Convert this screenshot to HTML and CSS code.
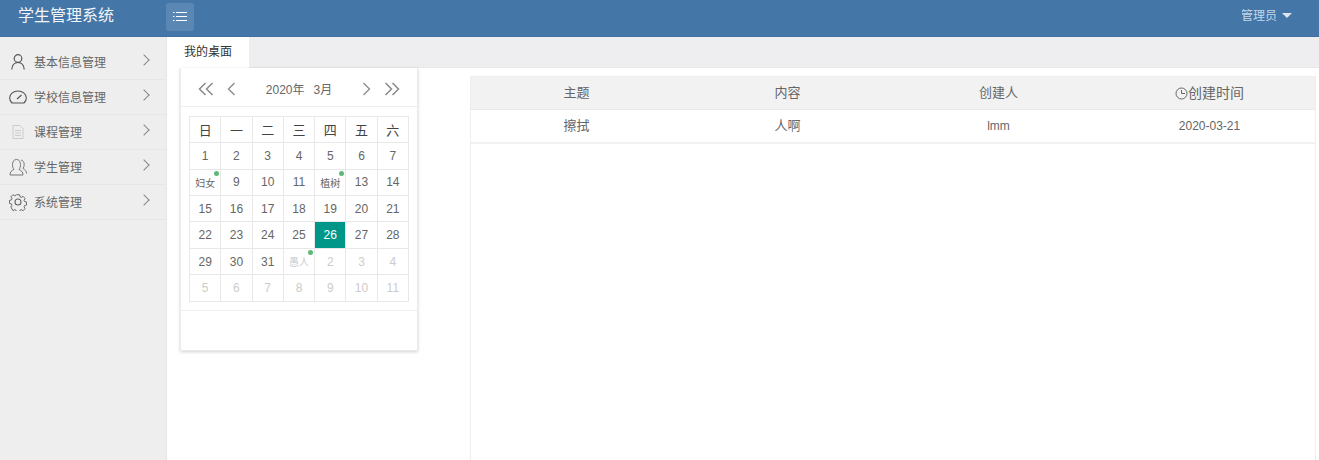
FILE: index.html
```html
<!DOCTYPE html>
<html lang="zh-CN">
<head>
<meta charset="utf-8">
<title>学生管理系统</title>
<link rel="stylesheet" href="styles.css">
</head>
<body>
<header class="topbar">
  <div class="brand">学生管理系统</div>
  <button class="menu-toggle" aria-label="menu">
    <svg width="16" height="12" viewBox="0 0 16 12" fill="none" stroke="#fff" stroke-width="1"><path d="M1 1.500h1.500M4 1.500h11M1 5.500h1.500M4 5.500h11M1 9.500h1.500M4 9.500h11"/></svg>
  </button>
  <div class="user">管理员<span class="caret"></span></div>
</header>
<div class="body">
  <aside class="sidebar">
    <div class="nav-item">
      <svg class="nav-icon" width="18" height="18" viewBox="0 0 18 18" fill="none" stroke="#555" stroke-width="1.200"><circle cx="9" cy="5.500" r="3.800"/><path d="M2.800 16.500c.3-4 2.500-7 6.200-7s5.900 3 6.200 7"/></svg>
      <span class="nav-label">基本信息管理</span><span class="chev"></span>
    </div>
    <div class="nav-item">
      <svg class="nav-icon" width="18" height="18" viewBox="0 0 18 18" fill="none" stroke="#555" stroke-width="1.100"><path d="M3 15h12c1.800-1.700 2.500-3.500 2.300-5.300C17 5.700 13.500 3 9 3S1 5.700.7 9.700C.5 11.500 1.200 13.300 3 15z"/><path d="M8 11l4.500-4"/></svg>
      <span class="nav-label">学校信息管理</span><span class="chev"></span>
    </div>
    <div class="nav-item">
      <svg class="nav-icon" width="18" height="18" viewBox="0 0 18 18" fill="none" stroke="#ccc" stroke-width="1"><path d="M4 2.500h7l3 3v10H4z"/><path d="M6 7.500h6M6 10h6M6 12.500h6"/></svg>
      <span class="nav-label">课程管理</span><span class="chev"></span>
    </div>
    <div class="nav-item">
      <svg class="nav-icon" width="18" height="18" viewBox="0 0 18 18" fill="none" stroke="#777" stroke-width="1"><path d="M1 17c0-3 1.500-4.500 4-5.500C3.800 10 3.500 8.500 3.500 6.500 3.500 3.500 5 1.500 7.500 1.500s4 2 4 5c0 2-.4 3.500-1.500 5 2.500 1 4 2.500 4 5.500z"/><path d="M12 2c2 .4 3.200 2 3.200 4.500 0 1.500-.4 3-1.200 4 2 .8 3.500 2.500 3.500 5"/></svg>
      <span class="nav-label">学生管理</span><span class="chev"></span>
    </div>
    <div class="nav-item">
      <svg class="nav-icon" width="18" height="18" viewBox="0 0 18 18" fill="none" stroke="#666" stroke-width="1.100"><circle cx="9" cy="9" r="3"/><path d="M7.300.800h3.400l.5 2.300 1.500.7 2-1.200 2.300 2.400-1.200 2 .6 1.500 2.200.5v3.400l-2.200.5-.6 1.500 1.200 2-2.300 2.400-2-1.200-1.500.7-.5 2.300H7.300l-.5-2.300-1.500-.7-2 1.200L1 14.600l1.200-2-.6-1.500-2.200-.5V7.200l2.200-.5.6-1.500L1 3.200 3.300.8l2 1.200 1.500-.7z" transform="translate(1 1) scale(.89)"/></svg>
      <span class="nav-label">系统管理</span><span class="chev"></span>
    </div>
  </aside>
  <main class="content">
    <div class="tabs"><div class="tab">我的桌面</div></div>
    <div class="desk">
      <section class="calendar">
        <div class="cal-head">
          <span class="cal-arrows">
            <svg width="16" height="14" viewBox="0 0 16 14" fill="none" stroke="#8a8a8a" stroke-width="1.500"><path d="M7.500 1L1.500 7l6 6M14.500 1l-6 6 6 6"/></svg>
            <svg width="9" height="14" viewBox="0 0 9 14" fill="none" stroke="#8a8a8a" stroke-width="1.300"><path d="M7.500 1L1.500 7l6 6"/></svg>
          </span>
          <span class="cal-title"><span>2020年</span><span>3月</span></span>
          <span class="cal-arrows">
            <svg width="9" height="14" viewBox="0 0 9 14" fill="none" stroke="#8a8a8a" stroke-width="1.300"><path d="M1.500 1l6 6-6 6"/></svg>
            <svg width="16" height="14" viewBox="0 0 16 14" fill="none" stroke="#8a8a8a" stroke-width="1.500"><path d="M1.500 1l6 6-6 6M8.500 1l6 6-6 6"/></svg>
          </span>
        </div>
        <div class="cal-body">
          <table class="cal-table">
            <thead><tr><th>日</th><th>一</th><th>二</th><th>三</th><th>四</th><th>五</th><th>六</th></tr></thead>
            <tbody>
              <tr><td>1</td><td>2</td><td>3</td><td>4</td><td>5</td><td>6</td><td>7</td></tr>
              <tr><td class="mark">妇女</td><td>9</td><td>10</td><td>11</td><td class="mark">植树</td><td>13</td><td>14</td></tr>
              <tr><td>15</td><td>16</td><td>17</td><td>18</td><td>19</td><td>20</td><td>21</td></tr>
              <tr><td>22</td><td>23</td><td>24</td><td>25</td><td class="today">26</td><td>27</td><td>28</td></tr>
              <tr><td>29</td><td>30</td><td>31</td><td class="mark off">愚人</td><td class="off">2</td><td class="off">3</td><td class="off">4</td></tr>
              <tr><td class="off">5</td><td class="off">6</td><td class="off">7</td><td class="off">8</td><td class="off">9</td><td class="off">10</td><td class="off">11</td></tr>
            </tbody>
          </table>
        </div>
        <div class="cal-foot"></div>
      </section>
      <section class="records">
        <div class="rec-row rec-head">
          <div>主题</div><div>内容</div><div>创建人</div>
          <div class="time-col"><svg width="13" height="13" viewBox="0 0 13 13" fill="none" stroke="#666" stroke-width="1"><circle cx="6.500" cy="6.500" r="5.500"/><path d="M6.500 3v3.500H10"/></svg>创建时间</div>
        </div>
        <div class="rec-row">
          <div class="cjk-cell">擦拭</div><div class="cjk-cell">人啊</div><div>lmm</div><div>2020-03-21</div>
        </div>
      </section>
    </div>
  </main>
</div>
</body>
</html>
```
FILE: styles.css
```css
* { box-sizing: border-box; }
html, body { margin: 0; height: 100%; overflow: hidden; }
body {
  font-family: "Liberation Sans", "Noto Sans CJK SC", sans-serif;
  font-size: 13px;
  color: #666;
  background: #fff;
  display: flex;
  flex-direction: column;
}
.topbar {
  flex: none;
  height: 37px;
  background: #4476a7;
  border-bottom: 1px solid #3f70a0;
  display: flex;
  align-items: center;
  color: #fff;
}
.brand {
  width: 166px;
  padding: 0 0 5px 18px;
  font-size: 16px;
  line-height: 20px;
  color: #f2f5f9;
}
.menu-toggle {
  width: 28px;
  height: 28px;
  margin-top: -2px;
  padding: 0;
  border: 0;
  border-radius: 2px;
  background: #5a87b3;
  display: flex;
  align-items: center;
  justify-content: center;
}
.user {
  margin-left: auto;
  margin-right: 27px;
  padding-bottom: 8px;
  font-size: 12px;
  color: #c5d6e8;
  display: flex;
  align-items: center;
}
.caret {
  margin-left: 5px;
  margin-top: 2px;
  border-left: 5px solid transparent;
  border-right: 5px solid transparent;
  border-top: 5px solid #dbe5f0;
}
.body { flex: 1; display: flex; min-height: 0; }
.sidebar {
  flex: none;
  width: 167px;
  background: #eee;
  padding-top: 8px;
  border-right: 1px solid #e6e6e6;
}
.nav-item {
  height: 35px;
  border-bottom: 1px solid #e6e6e6;
  display: flex;
  align-items: center;
  padding-left: 9px;
  position: relative;
}
.nav-icon { flex: none; }
.nav-label { margin-left: 7px; padding-bottom: 2px; font-size: 12px; color: #666; }
.chev {
  position: absolute;
  right: 18px;
  top: 11px;
  width: 8px;
  height: 8px;
  border-top: 1px solid #888;
  border-right: 1px solid #888;
  transform: rotate(45deg);
}
.content { flex: 1; min-width: 0; display: flex; flex-direction: column; }
.tabs {
  flex: none;
  height: 31px;
  background: #eeeef0;
  border-bottom: 1px solid #e8e8e8;
  display: flex;
}
.tab {
  width: 82px;
  height: 31px;
  background: #fff;
  color: #333;
  font-size: 12px;
  text-align: center;
  line-height: 31px;
}
.desk { flex: 1; display: flex; align-items: flex-start; padding-left: 13px; min-height: 0; }
.calendar {
  flex: none;
  width: 238px;
  height: 283px;
  background: #fff;
  border: 1px solid #eaeaea;
  border-top: 0;
  box-shadow: 0 1px 3px rgba(0, 0, 0, .18);
  display: flex;
  flex-direction: column;
}
.cal-head {
  height: 39px;
  border-bottom: 1px solid #eee;
  display: flex;
  align-items: center;
  justify-content: space-between;
  padding: 3px 17px 0 17px;
}
.cal-arrows { display: flex; align-items: center; gap: 13px; }
.cal-title { display: flex; gap: 9px; font-size: 12px; color: #666; }
.cal-body { flex: 1; padding: 8.900px 8px 0 9px; border-bottom: 1px solid #eee; }
.cal-table {
  width: 220px;
  margin-left: -1px;
  table-layout: fixed;
  border-collapse: collapse;
  font-size: 12px;
}
.cal-table th, .cal-table td {
  border: 1px solid #e8e8e8;
  height: 26.400px;
  padding: 0;
  text-align: center;
  font-weight: 400;
  color: #666;
}
.cal-table th { color: #444; font-size: 13px; }
.cal-table .mark { position: relative; font-size: 10px; }
.cal-table .mark::after {
  content: "";
  position: absolute;
  top: 1px;
  right: 1px;
  width: 5px;
  height: 5px;
  border-radius: 50%;
  background: #5fb878;
}
.cal-table .off { color: #ccc; }
.cal-table .today { background: #009688; color: #fff; }
.cal-foot { flex: none; height: 39px; }
.records {
  flex: 1;
  min-width: 0;
  margin: 8px 3px 0 52px;
  height: 400px;
  border: 1px solid #eee;
}
.rec-row {
  display: grid;
  grid-template-columns: repeat(4, 1fr);
  height: 34px;
  line-height: 30px;
  align-items: center;
  text-align: center;
  font-size: 12px;
  border-bottom: 2px solid #f2f2f2;
  color: #666;
}
.rec-row .cjk-cell { font-size: 13px; }
.rec-head { height: 33px; line-height: 32px; background: #f2f2f2; border-bottom: 1px solid #e8e8e8; font-size: 13px; }
.time-col { display: flex; align-items: center; justify-content: center; font-size: 14px; }
```
